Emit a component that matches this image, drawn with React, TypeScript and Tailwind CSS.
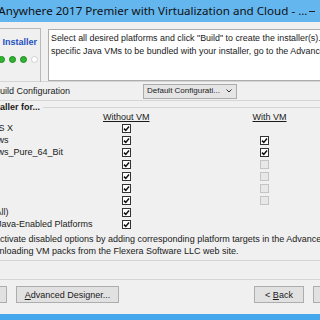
import React from 'react';

type Cell = 'on' | 'off' | 'none';

interface PlatformRow {
    label: string;
    noVm: Cell;
    withVm: Cell;
}

const platforms: PlatformRow[] = [
    { label: 'Mac OS X', noVm: 'on', withVm: 'none' },
    { label: 'Windows', noVm: 'on', withVm: 'on' },
    { label: 'Windows_Pure_64_Bit', noVm: 'on', withVm: 'on' },
    { label: 'Linux', noVm: 'on', withVm: 'off' },
    { label: 'Solaris', noVm: 'on', withVm: 'off' },
    { label: 'AIX', noVm: 'on', withVm: 'off' },
    { label: 'HP-UX', noVm: 'on', withVm: 'off' },
    { label: 'Unix (All)', noVm: 'on', withVm: 'none' },
    { label: 'Other Java-Enabled Platforms', noVm: 'on', withVm: 'none' }
];

const Box: React.FC<{ state: Cell }> = ({ state }) => {
    if (state === 'none') return <div className="w-[9px] h-[9px]" />;
    if (state === 'off') return <div className="w-[9px] h-[9px] border border-[#c4c4c4] bg-[#e8e8e8]" />;
    return (
        <div className="w-[9px] h-[9px] border border-[#333333] bg-white flex items-center justify-center">
            <svg viewBox="0 0 7 7" className="w-[7px] h-[7px]">
                <path d="M1 3.6 L2.8 5.4 L6 1.6" fill="none" stroke="#111" strokeWidth="1.5" />
            </svg>
        </div>
    );
};

const Dot: React.FC<{ on?: boolean }> = ({ on = true }) => (
    <div
        className={
            on
                ? 'w-[7px] h-[7px] rounded-full bg-[#2fb52f] border border-[#1f8a1f] shrink-0'
                : 'w-[7px] h-[7px] rounded-full bg-white border border-[#d0d0d0] shrink-0'
        }
    />
);

const Button: React.FC<{ className?: string; children: React.ReactNode }> = ({ className = '', children }) => (
    <div
        className={`h-[17px] shrink-0 bg-[#e1e1e1] border border-[#adadad] flex items-center justify-center text-[9px] text-[#1a1a1a] whitespace-nowrap ${className}`}
    >
        {children}
    </div>
);

export default function App() {
    return (
        <div className="w-[320px] h-[320px] overflow-hidden bg-[#f0f0f0] flex flex-col text-[#1a1a1a] font-['Liberation_Sans',Arial,sans-serif] text-[9px] leading-[12px]">
            {/* title bar */}
            <div className="h-[22px] shrink-0 bg-[#64b6ee] flex items-center">
                <span className="-ml-[35px] text-[11.6px] leading-[22px] text-[#111] whitespace-nowrap font-['Noto_Sans',sans-serif]">
                    InstallAnywhere 2017 Premier with Virtualization and Cloud - ...
                </span>
                <div className="ml-auto mr-[5px] w-[6px] h-px bg-[#222]" />
            </div>

            {/* header */}
            <div className="h-[60px] shrink-0 flex items-start border-b border-[#d5d5d5]">
                <div className="mt-[6px] w-[41px] h-[54px] shrink-0 border-t border-r border-[#b9b9b9] flex flex-col items-end pr-[3px]">
                    <span className="mt-[7px] font-bold text-[#1f4fbf] whitespace-nowrap">Build Installer</span>
                    <div className="mt-[8px] flex gap-[4px] -mr-[1px]">
                        <Dot />
                        <Dot />
                        <Dot />
                        <Dot on={false} />
                    </div>
                </div>
                <div className="mt-[7px] ml-[7px] h-[52px] flex-1 bg-white border border-r-0 border-[#adadad] pl-[2px] pt-[2px] overflow-hidden whitespace-nowrap leading-[13px] text-[8.9px]">
                    <div>Select all desired platforms and click "Build" to create the installer(s). To include</div>
                    <div>specific Java VMs to be bundled with your installer, go to the Advanced Designer.</div>
                </div>
            </div>

            {/* build configuration */}
            <div className="h-[19px] shrink-0 flex items-center border-b border-[#d5d5d5]">
                <div className="w-[143px] shrink-0 whitespace-nowrap">
                    <span className="-ml-[6px]">Build Configuration</span>
                </div>
                <div className="w-[94px] h-[15px] bg-[#e5e5e5] border border-[#acacac] flex items-center pl-[3px] pr-[4px]">
                    <span className="whitespace-nowrap text-[8px]">Default Configurati...</span>
                    <svg viewBox="0 0 6 4" className="ml-auto w-[6px] h-[4px]">
                        <path d="M0.5 0.5 L3 3 L5.5 0.5" fill="none" stroke="#333" strokeWidth="1" />
                    </svg>
                </div>
            </div>

            {/* group box */}
            <div className="h-[12px] shrink-0 flex items-center">
                <span className="-ml-[41px] font-bold whitespace-nowrap">Build Installer for...</span>
                <div className="ml-[3px] flex-1 h-px bg-[#d5d5d5]" />
            </div>
            <div className="h-[9px] shrink-0 flex items-center leading-[9px]">
                <span className="ml-[103px] underline">Without VM</span>
                <span className="ml-[103px] underline">With VM</span>
            </div>
            {platforms.map((p, i) => (
                <div key={i} className="h-[12px] shrink-0 flex items-center">
                    <div className="w-[122px] shrink-0 whitespace-nowrap">
                        <span className="-ml-[28px]">{p.label}</span>
                    </div>
                    <Box state={p.noVm} />
                    <div className="ml-[129px]">
                        <Box state={p.withVm} />
                    </div>
                </div>
            ))}
            <div className="mt-[3px] shrink-0 whitespace-nowrap">
                <div className="-ml-[6px]">Activate disabled options by adding corresponding platform targets in the Advanced Designer, or by</div>
                <div className="-ml-[17px]">downloading VM packs from the Flexera Software LLC web site.</div>
            </div>
            <div className="h-[4px] shrink-0 border-b border-[#d5d5d5]" />

            {/* buttons */}
            <div className="h-[19px] shrink-0 border-b border-[#d5d5d5]" />
            <div className="mt-[6px] shrink-0 flex">
                <Button className="w-[40px] -ml-[33px]">Help</Button>
                <Button className="w-[103px] ml-[9px]">
                    <span>
                        <span className="underline">A</span>dvanced Designer...
                    </span>
                </Button>
                <Button className="w-[50px] ml-[135px]">
                    <span>
                        &lt; <span className="underline">B</span>ack
                    </span>
                </Button>
                <Button className="w-[50px] ml-[9px]">
                    <span>
                        <span className="underline">N</span>ext &gt;
                    </span>
                </Button>
            </div>
            <div className="flex-1" />
            <div className="h-[6px] shrink-0 bg-[#45a8ec]" />
        </div>
    );
}
